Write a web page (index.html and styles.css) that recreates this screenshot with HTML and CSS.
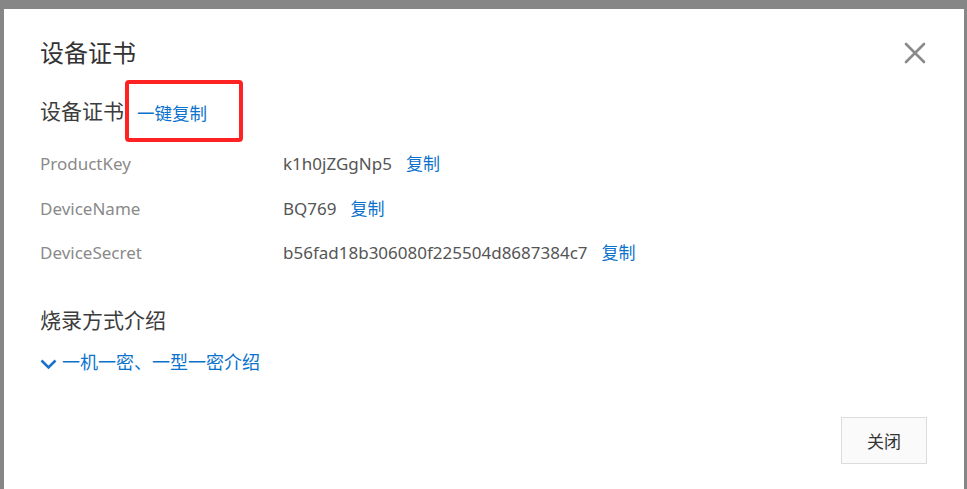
FILE: index.html
```html
<!DOCTYPE html>
<html lang="zh-CN">
<head>
<meta charset="utf-8">
<title>设备证书</title>
<link rel="stylesheet" href="styles.css">
</head>
<body>
<div class="modal">
  <div class="modal-header">
    <h1 class="modal-title">设备证书</h1>
    <button class="close-btn" aria-label="关闭">
      <svg width="22" height="22" viewBox="0 0 22 22"><path d="M2 2 L20 20 M20 2 L2 20" stroke="#8a8a8a" stroke-width="2.6" stroke-linecap="round" fill="none"/></svg>
    </button>
  </div>
  <div class="section-head">
    <span class="section-title">设备证书</span>
    <a class="link copy-all">一键复制</a>
    <span class="annot-box"></span>
  </div>
  <div class="cert-grid">
    <div class="label">ProductKey</div>
    <div class="value">k1h0jZGgNp5<a class="link copy">复制</a></div>
    <div class="label">DeviceName</div>
    <div class="value">BQ769<a class="link copy">复制</a></div>
    <div class="label">DeviceSecret</div>
    <div class="value">b56fad18b306080f225504d8687384c7<a class="link copy">复制</a></div>
  </div>
  <div class="section-title burn-title">烧录方式介绍</div>
  <a class="link toggle">
    <svg width="17" height="11" viewBox="0 0 17 11"><path d="M1.5 1.5 L8.5 8.5 L15.5 1.5" stroke="#1a72c9" stroke-width="2.6" fill="none"/></svg>
    <span>一机一密、一型一密介绍</span>
  </a>
  <div class="modal-footer">
    <button class="btn">关闭</button>
  </div>
</div>
</body>
</html>
```
FILE: styles.css
```css
html, body {
  margin: 0;
  padding: 0;
}
body {
  background: #868686;
  height: 489px;
  overflow: hidden;
  font-family: "Noto Sans", "Noto Sans CJK SC", sans-serif;
}
.modal {
  margin: 9px 0 0 4px;
  width: 960px;
  height: 500px;
  background: #fff;
  box-sizing: border-box;
  padding: 28px 38px 0 36px;
  display: flex;
  flex-direction: column;
}
.modal-header {
  display: flex;
  justify-content: space-between;
  align-items: center;
  height: 32px;
}
.modal-title {
  margin: 0;
  font-size: 24px;
  font-weight: normal;
  line-height: 32px;
  color: #333;
}
.close-btn {
  border: 0;
  background: none;
  padding: 0;
  width: 22px;
  height: 22px;
  display: flex;
}
.section-head {
  position: relative;
  margin-top: 27px;
  display: flex;
  align-items: center;
  height: 30px;
}
.section-title {
  font-size: 21px;
  line-height: 30px;
  color: #3c3c3c;
}
.link {
  color: #0b72cc;
  cursor: pointer;
}
.copy-all {
  margin-left: 13px;
  margin-top: 3px;
  font-size: 17.5px;
  line-height: 24px;
}
.annot-box {
  position: absolute;
  left: 85px;
  top: -16px;
  width: 118px;
  height: 62px;
  box-sizing: border-box;
  border: 4px solid #ff2222;
  border-radius: 4px;
}
.cert-grid {
  margin-top: 26px;
  display: grid;
  grid-template-columns: 243px 1fr;
  row-gap: 20.5px;
  font-size: 17px;
  line-height: 24px;
}
.label {
  color: #8a8a8a;
}
.value {
  color: #555;
}
.copy {
  margin-left: 14px;
}
.burn-title {
  margin-top: 40px;
}
.toggle {
  margin-top: 14px;
  display: flex;
  align-items: center;
  gap: 5px;
  font-size: 18px;
  line-height: 26px;
}
.toggle svg {
  margin-top: 4px;
}
.modal-footer {
  margin-top: 42px;
  display: flex;
  justify-content: flex-end;
}
.btn {
  width: 86px;
  height: 47px;
  border: 1px solid #dcdcdc;
  background: #fafafa;
  color: #333;
  font-family: "Noto Sans", "Noto Sans CJK SC", sans-serif;
  font-size: 17px;
  padding: 0;
  margin-right: -1px;
}
```
